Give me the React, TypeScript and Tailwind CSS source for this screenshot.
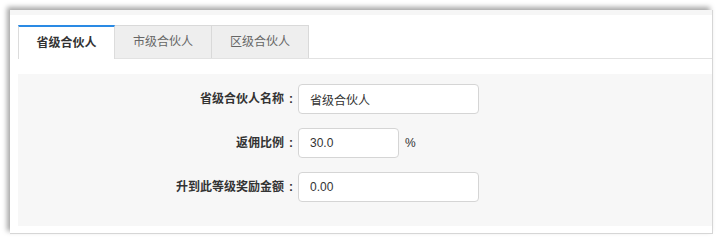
import { useState } from "react";

const tabs = ["省级合伙人", "市级合伙人", "区级合伙人"];

export default function App() {
  const [active, setActive] = useState(0);

  return (
    <div
      className="w-[719px] h-[240px] bg-white pt-[10px] pl-[10px]"
      style={{ fontFamily: '"Liberation Sans", "Noto Sans CJK SC", sans-serif' }}
    >
      <div className="w-[703px] h-[224px] bg-white border-r border-b border-[#d6d6d6] shadow-[-3px_-3px_5px_rgba(0,0,0,0.35)] flex flex-col">
        <div className="h-[5px] bg-[#f6f6f6]" />
        <div className="pl-[8px] pt-[10px] flex flex-col">
          {/* 选项卡 */}
          <div className="flex border-b border-[#e2e2e2] h-[34px]">
            {tabs.map((t, i) => (
              <button
                key={t}
                onClick={() => setActive(i)}
                className={
                  (i === 0 ? "border-l border-l-[#dcdcdc] " : "") +
                  (i === active
                    ? "w-[97px] h-[34px] -mb-px bg-white border-t-2 border-t-[#2a8ae4] border-r border-r-[#dcdcdc] text-[12px] font-bold text-[#333]"
                    : "w-[97px] h-[33px] bg-[#eeeeee] border-t border-r border-[#d9d9d9] text-[12px] text-[#666]")
                }
              >
                {t}
              </button>
            ))}
          </div>

          {/* 表单 */}
          <div className="mt-[15px] h-[152px] bg-[#f7f7f7] pt-[10px] flex flex-col gap-[14px]">
            <Row label="省级合伙人名称" value="省级合伙人" width="w-[181px]" />
            <Row label="返佣比例" value="30.0" width="w-[101px]" suffix="%" />
            <Row label="升到此等级奖励金额" value="0.00" width="w-[181px]" />
          </div>
        </div>
      </div>
    </div>
  );
}

function Row({
  label,
  value,
  width,
  suffix,
}: {
  label: string;
  value: string;
  width: string;
  suffix?: string;
}) {
  return (
    <div className="flex items-center h-[30px]">
      <label className="w-[280px] flex justify-end items-center text-[12px] font-bold text-[#333]">
        {label}
        <span className="w-[14px] text-center">:</span>
      </label>
      <input
        defaultValue={value}
        className={`${width} h-[30px] rounded-[4px] border border-[#d5d5d5] bg-white px-[11px] text-[12px] text-[#333] outline-none`}
      />
      {suffix && <span className="ml-[6px] text-[12px] text-[#333]">{suffix}</span>}
    </div>
  );
}
